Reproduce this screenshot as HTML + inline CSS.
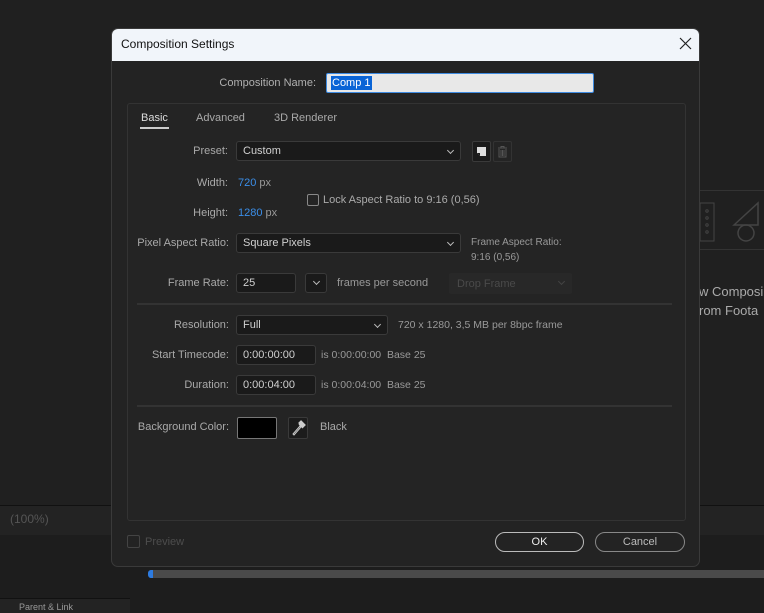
<!DOCTYPE html>
<html><head><style>
*{box-sizing:border-box;margin:0;padding:0}
body{width:764px;height:613px;background:#1e1e1e;font-family:"Liberation Sans",sans-serif;font-size:11px;color:#b8b8b8;position:relative;overflow:hidden}
.a{position:absolute}
.lbl{position:absolute;text-align:right;color:#a9a9a9;font-size:11px}
.box{position:absolute;background:#1a1a1a;border:1px solid #3a3a3a;border-radius:3px;color:#d0d0d0;padding-left:6px;line-height:19px;font-size:11px}
.chev{position:absolute;right:7px;top:6px;width:5px;height:5px;border-right:1px solid #bbb;border-bottom:1px solid #bbb;transform:rotate(45deg)}
.blue{color:#3b8ee8}
</style></head><body>
<div class="a" style="left:0;top:0;width:764px;height:505px;background:#202020"></div>
<div class="a" style="left:700px;top:190px;width:64px;height:60px;border-top:1px solid #333;border-bottom:1px solid #333"></div>
<svg class="a" style="left:700px;top:195px" width="64" height="50"><rect x="0" y="8" width="14" height="38" fill="none" stroke="#444"/><circle cx="7" cy="16" r="1.2" fill="none" stroke="#444"/><circle cx="7" cy="23" r="1.2" fill="none" stroke="#444"/><circle cx="7" cy="30" r="1.2" fill="none" stroke="#444"/><circle cx="7" cy="37" r="1.2" fill="none" stroke="#444"/><path d="M34 30 L58 8 L58 30 Z" fill="none" stroke="#444" stroke-width="1.5"/><circle cx="46" cy="38" r="8" fill="none" stroke="#444" stroke-width="1.5"/></svg>
<div class="a" style="left:699px;top:282px;color:#aaa;font-size:13px;line-height:19px;white-space:nowrap">w Composi<br>rom Foota</div>
<div class="a" style="left:0;top:505px;width:764px;height:30px;background:#232323;border-top:1px solid #111"></div>
<div class="a" style="left:10px;top:512px;color:#555;font-size:12px">(100%)</div>
<div class="a" style="left:0;top:535px;width:764px;height:78px;background:#1d1d1d"></div>
<div class="a" style="left:150px;top:570px;width:614px;height:8px;background:#4a4a4a"></div>
<div class="a" style="left:148px;top:570px;width:5px;height:8px;background:#2d7be0;border-radius:3px 0 0 3px"></div>
<div class="a" style="left:0;top:598px;width:130px;height:15px;background:#232323;border-top:1px solid #111"></div>
<div class="a" style="left:19px;top:602px;color:#999;font-size:9px">Parent &amp; Link</div>
<div class="a" style="left:111px;top:28px;width:589px;height:539px;background:#232323;border:1px solid #3a3a3a;border-radius:7px;overflow:hidden">
 <div class="a" style="left:0;top:0;width:589px;height:32px;background:#f1f5fa"></div>
 <div class="a" style="left:9px;top:8px;color:#111;font-size:12px">Composition Settings</div>
 <svg class="a" style="left:567px;top:8px" width="14" height="14"><path d="M1 1 L12 12 M12 1 L1 12" stroke="#222" stroke-width="1.2"/></svg>
</div>
<div class="lbl" style="left:180px;top:77px;width:136px;color:#b0b0b0">Composition Name:</div>
<div class="a" style="left:326px;top:73px;width:268px;height:20px;background:#e8e8e8;border:1px solid #3f8be0;border-radius:2px"><span style="position:absolute;left:4px;top:2px;background:#0a64d6;color:#fff;font-size:11px;padding:0 1px;line-height:14px">Comp 1</span></div>
<div class="a" style="left:127px;top:103px;width:559px;height:418px;border:1px solid #333;border-radius:3px;background:#242424"></div>
<div class="a" style="left:141px;top:112px;color:#ddd">Basic</div>
<div class="a" style="left:140px;top:127px;width:29px;height:2px;background:#ccc"></div>
<div class="a" style="left:196px;top:112px;color:#aaa">Advanced</div>
<div class="a" style="left:274px;top:112px;color:#aaa">3D Renderer</div>
<div class="lbl" style="left:150px;top:145px;width:78px">Preset:</div>
<div class="box" style="left:236px;top:141px;width:225px;height:20px">Custom<div class="chev"></div></div>
<div class="a" style="left:472px;top:141px;width:19px;height:21px;background:#1a1a1a;border:1px solid #3a3a3a;border-radius:2px"><svg width="17" height="19"><path d="M4 5 H13 V14 H7 L4 11 Z" fill="#ddd"/><path d="M4 11 H7 V14" fill="#1a1a1a"/></svg></div>
<div class="a" style="left:493px;top:141px;width:19px;height:21px;border:1px solid #333;border-radius:2px"><svg width="17" height="19"><path d="M4 6 H13 M7 6 V4.5 H10 V6 M5 7 V15 H12 V7 M7 8 V14 M8.5 8 V14 M10 8 V14" stroke="#555" fill="none"/></svg></div>
<div class="lbl" style="left:150px;top:177px;width:78px">Width:</div>
<div class="a" style="left:238px;top:177px"><span class="blue">720</span> <span style="color:#999">px</span></div>
<div class="lbl" style="left:150px;top:207px;width:78px">Height:</div>
<div class="a" style="left:238px;top:207px"><span class="blue">1280</span> <span style="color:#999">px</span></div>
<div class="a" style="left:307px;top:194px;width:12px;height:12px;border:1px solid #888;border-radius:2px"></div>
<div class="a" style="left:323px;top:194px;color:#aaa">Lock Aspect Ratio to 9:16 (0,56)</div>
<div class="lbl" style="left:130px;top:237px;width:99px">Pixel Aspect Ratio:</div>
<div class="box" style="left:236px;top:233px;width:225px;height:20px">Square Pixels<div class="chev"></div></div>
<div class="a" style="left:471px;top:235px;color:#999;font-size:10px;line-height:15px">Frame Aspect Ratio:<br>9:16 (0,56)</div>
<div class="lbl" style="left:150px;top:277px;width:79px">Frame Rate:</div>
<div class="box" style="left:236px;top:273px;width:60px;height:20px">25</div>
<div class="box" style="left:305px;top:273px;width:22px;height:20px"><div class="chev" style="right:7px;top:5px"></div></div>
<div class="a" style="left:337px;top:277px;color:#999">frames per second</div>
<div class="a" style="left:449px;top:273px;width:123px;height:21px;background:#282828;border-radius:2px;color:#4a4a4a;padding:5px 0 0 8px">Drop Frame<div class="chev" style="border-color:#444;top:6px;right:8px"></div></div>
<div class="a" style="left:137px;top:303px;width:535px;height:2px;background:#333"></div>
<div class="lbl" style="left:150px;top:319px;width:79px">Resolution:</div>
<div class="box" style="left:236px;top:315px;width:152px;height:20px">Full<div class="chev"></div></div>
<div class="a" style="left:398px;top:319px;color:#999;font-size:10.5px">720 x 1280, 3,5 MB per 8bpc frame</div>
<div class="lbl" style="left:130px;top:349px;width:99px">Start Timecode:</div>
<div class="box" style="left:236px;top:345px;width:80px;height:20px">0:00:00:00</div>
<div class="a" style="left:321px;top:349px;color:#999;font-size:10.5px">is 0:00:00:00&nbsp; Base 25</div>
<div class="lbl" style="left:150px;top:379px;width:79px">Duration:</div>
<div class="box" style="left:236px;top:375px;width:80px;height:20px">0:00:04:00</div>
<div class="a" style="left:321px;top:379px;color:#999;font-size:10.5px">is 0:00:04:00&nbsp; Base 25</div>
<div class="a" style="left:137px;top:405px;width:535px;height:2px;background:#333"></div>
<div class="lbl" style="left:130px;top:421px;width:99px">Background Color:</div>
<div class="a" style="left:237px;top:417px;width:40px;height:22px;background:#000;border:1px solid #777;border-radius:2px"></div>
<div class="a" style="left:288px;top:417px;width:20px;height:22px;border:1px solid #3a3a3a;border-radius:2px;background:#1c1c1c"><svg width="18" height="20"><path d="M5 17 L4 16 L11 8 L12 9 Z" stroke="#ccc" stroke-width="1" fill="none"/><path d="M10 6 L14 10 M12 3 L16 7 L14 9 L10 5 Z" stroke="#ccc" stroke-width="1.3" fill="#ccc"/></svg></div>
<div class="a" style="left:320px;top:421px;color:#aaa">Black</div>
<div class="a" style="left:127px;top:535px;width:13px;height:13px;border:1px solid #444;border-radius:2px"></div>
<div class="a" style="left:145px;top:536px;color:#4d4d4d">Preview</div>
<div class="a" style="left:495px;top:532px;width:89px;height:20px;border:1px solid #bbb;border-radius:10px;color:#eee;text-align:center;line-height:18px">OK</div>
<div class="a" style="left:595px;top:532px;width:90px;height:20px;border:1px solid #888;border-radius:10px;color:#bbb;text-align:center;line-height:18px">Cancel</div>
</body></html>
